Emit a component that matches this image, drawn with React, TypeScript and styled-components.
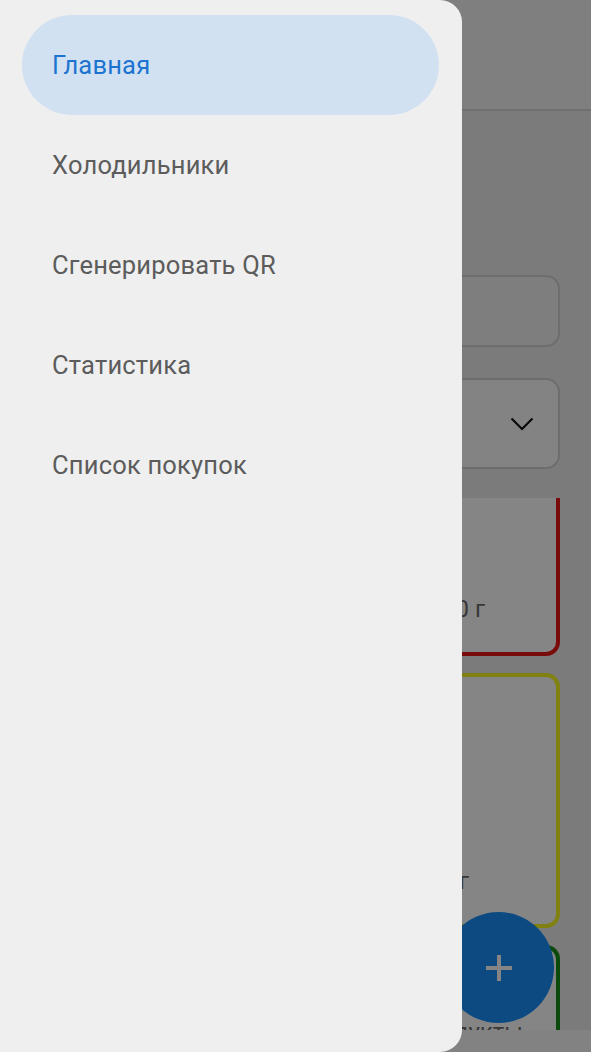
import React from "react";
import styled, { createGlobalStyle } from "styled-components";

const GlobalStyle = createGlobalStyle`
  html, body {
    margin: 0;
    padding: 0;
    overflow: hidden;
  }
  body {
    font-family: Roboto, "Noto Sans", "Liberation Sans", sans-serif;
  }
`;

type CardData = {
  color: string;
  height: number;
  padRight: number;
  rows: string[];
};

// only the tails of the card values peek out from behind the drawer
const cards: CardData[] = [
  { color: "#ea1616", height: 180, padRight: 71, rows: ["", "1000 г"] },
  { color: "#f8f824", height: 255, padRight: 87, rows: ["", "", "300 г"] },
  { color: "#178f17", height: 200, padRight: 33, rows: ["", "Молочные продукты"] },
];

const menu = ["Главная", "Холодильники", "Сгенерировать QR", "Статистика", "Список покупок"];

function App() {
  return (
    <>
      <GlobalStyle />
      <Screen>
        <Page>
          <AppBar />
          <Content>
            <Header />
            <TextField />
            <Select>
              <svg width="24" height="14" viewBox="0 0 24 14">
                <path d="M1.5 1.5 L12 12 L22.5 1.5" fill="none" stroke="#111" strokeWidth="2.2" />
              </svg>
            </Select>
            <CardList>
              <CardScroll>
                {cards.map((c, i) => (
                  <Card key={i} $color={c.color} $h={c.height} $pr={c.padRight}>
                    {c.rows.map((v, j) => (
                      <CardRow key={j} $last={i < 2 && j === c.rows.length - 1}>
                        {v}
                      </CardRow>
                    ))}
                  </Card>
                ))}
              </CardScroll>
            </CardList>
          </Content>
          <BottomStrip />
        </Page>
        <Fab>
          <svg width="30" height="30" viewBox="0 0 30 30">
            <path d="M15 2 V28 M2 15 H28" stroke="#ffffff" strokeWidth="4" />
          </svg>
        </Fab>
        <Scrim />
        <Drawer>
          {menu.map((m, i) => (
            <NavItem key={m} $active={i === 0}>
              {m}
            </NavItem>
          ))}
        </Drawer>
      </Screen>
    </>
  );
}

export default App;

const Screen = styled.div`
  position: relative;
  width: 591px;
  height: 1052px;
  overflow: hidden;
  background: #ebebeb;
`;

const Page = styled.div`
  display: flex;
  flex-direction: column;
  height: 100%;
`;

const AppBar = styled.div`
  height: 109px;
  flex-shrink: 0;
  background: #f4f4f4;
  border-bottom: 2px solid #d6d6d6;
`;

const Content = styled.div`
  flex: 1;
  min-height: 0;
  display: flex;
  flex-direction: column;
  padding: 0 31px 0 30px;
`;

const Header = styled.div`
  height: 164px;
  flex-shrink: 0;
`;

const TextField = styled.div`
  height: 72px;
  flex-shrink: 0;
  box-sizing: border-box;
  border: 2px solid #d2d2d2;
  border-radius: 14px;
  background: #f2f2f2;
`;

const Select = styled.div`
  margin-top: 31px;
  height: 91px;
  flex-shrink: 0;
  box-sizing: border-box;
  border: 2px solid #d2d2d2;
  border-radius: 14px;
  background: #fbfbfb;
  display: flex;
  align-items: center;
  justify-content: flex-end;
  padding: 0 24px 0 20px;
`;

const CardList = styled.div`
  margin-top: 29px;
  flex: 1;
  min-height: 0;
  overflow: hidden;
`;

const CardScroll = styled.div`
  display: flex;
  flex-direction: column;
  gap: 17px;
  margin-top: -22px;
`;

const Card = styled.div<{ $color: string; $h: number; $pr: number }>`
  height: ${(p) => p.$h}px;
  box-sizing: border-box;
  flex-shrink: 0;
  border: 4px solid ${(p) => p.$color};
  border-radius: 14px;
  background: #ffffff;
  padding: 23px ${(p) => p.$pr}px 23px 24px;
  display: flex;
  flex-direction: column;
`;

const CardRow = styled.div<{ $last: boolean }>`
  height: 40px;
  flex-shrink: 0;
  margin-top: ${(p) => (p.$last ? "auto" : "0")};
  display: flex;
  align-items: center;
  justify-content: flex-end;
  font-size: 24px;
  color: #6c6c6c;
  white-space: nowrap;
`;

const BottomStrip = styled.div`
  height: 22px;
  flex-shrink: 0;
  background: #fafafa;
`;

const Fab = styled.div`
  position: absolute;
  left: 443px;
  top: 912px;
  width: 111px;
  height: 111px;
  border-radius: 50%;
  background: #198ffa;
  display: flex;
  align-items: center;
  justify-content: center;
`;

const Scrim = styled.div`
  position: absolute;
  inset: 0;
  background: rgba(0, 0, 0, 0.48);
`;

const Drawer = styled.nav`
  position: absolute;
  left: 0;
  top: 0;
  bottom: 0;
  width: 462px;
  box-sizing: border-box;
  background: #efefef;
  border-radius: 0 22px 22px 0;
  padding-top: 15px;
  display: flex;
  flex-direction: column;
`;

const NavItem = styled.div<{ $active: boolean }>`
  height: 100px;
  margin: 0 23px 0 22px;
  flex-shrink: 0;
  border-radius: 50px;
  padding-left: 30px;
  display: flex;
  align-items: center;
  font-size: 25.5px;
  letter-spacing: 0.2px;
  background: ${(p) => (p.$active ? "#d1e1f2" : "transparent")};
  color: ${(p) => (p.$active ? "#1c74d0" : "#5c5c5c")};
`;
